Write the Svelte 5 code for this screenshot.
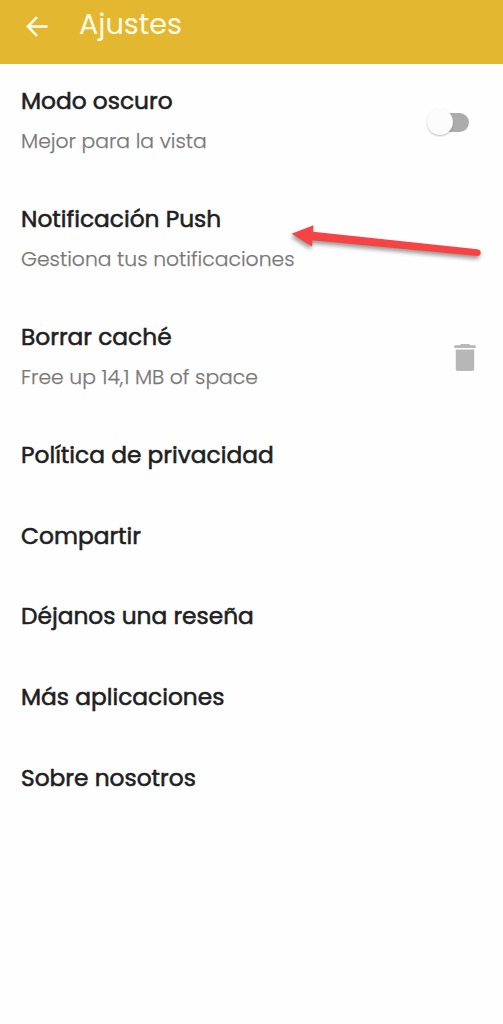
<script lang="ts">
    interface Setting {
        title: string;
        subtitle?: string;
        control?: 'switch' | 'trash';
    }

    const settings: Setting[] = [
        { title: "Modo oscuro", subtitle: "Mejor para la vista", control: "switch" },
        { title: "Notificación Push", subtitle: "Gestiona tus notificaciones" },
        { title: "Borrar caché", subtitle: "Free up 14,1 MB of space", control: "trash" },
        { title: "Política de privacidad" },
        { title: "Compartir" },
        { title: "Déjanos una reseña" },
        { title: "Más aplicaciones" },
        { title: "Sobre nosotros" }
    ];

    let darkMode: boolean = $state(false);
</script>

<div class="screen">
    <header>
        <button class="back" aria-label="Volver">
            <svg width="24" height="24" viewBox="0 0 24 24">
                <path d="M22.5 12.5H3M12 3.2L2.8 12.5L12 21.8" />
            </svg>
        </button>
        <h1>Ajustes</h1>
    </header>

    <main>
        {#each settings as item}
            <div class="item" class:tall={item.subtitle}>
                <div class="texts">
                    <div class="title">{item.title}</div>
                    {#if item.subtitle}
                        <div class="subtitle">{item.subtitle}</div>
                    {/if}
                </div>
                {#if item.control === 'switch'}
                    <button class="switch" class:on={darkMode} aria-label={item.title} onclick={() => darkMode = !darkMode}>
                        <span class="thumb"></span>
                    </button>
                {:else if item.control === 'trash'}
                    <svg class="trash" width="22" height="28" viewBox="0 0 22 28">
                        <path d="M0.3 1.3H5.6L7 0H15L16.4 1.3H21.7V4.1H0.3ZM1.8 5.5H20.2V24.5Q20.2 27.1 17.6 27.1H4.4Q1.8 27.1 1.8 24.5Z" />
                    </svg>
                {/if}
            </div>
        {/each}
    </main>

    <svg class="pointer" width="200" height="50" viewBox="285 220 200 50">
        <path d="M291.5 233.7L313.5 225.2L313 231.8L477.5 249.2Q481 250 480.8 253Q480.3 256.2 477 256L312.5 240.2L312 246.5Z" />
    </svg>
</div>

<style>
    :global(body) { margin: 0; background: #fefefe; }

    .screen {
        position: relative;
        height: 1024px;
        overflow: hidden;
        background: #fefefe;
        font-family: Poppins, Inter, sans-serif;
        white-space: nowrap;
    }

    header {
        height: 63.5px;
        box-sizing: border-box;
        padding: 0 25px 11px 24.5px;
        display: flex;
        align-items: center;
        background: #e3b830;
    }

    button { padding: 0; border: none; background: none; }

    .back { display: flex; width: 54.5px; }
    .back path { fill: none; stroke: #fffbe9; stroke-width: 2.5; }

    h1 {
        margin: 0 0 4.5px;
        font-size: 28.7px;
        line-height: 34px;
        font-weight: 400;
        color: #fffbe9;
    }

    .item {
        height: 80.8px;
        padding: 0 21px;
        display: flex;
        align-items: center;
        justify-content: space-between;
    }
    .item.tall { height: 117.8px; }

    .texts { margin-top: -5px; }
    .tall .texts { margin-top: -2.4px; }

    .title {
        font-size: 23.3px;
        line-height: 40px;
        font-weight: 400;
        color: #202020;
        -webkit-text-stroke: 0.55px #202020;
    }

    .subtitle {
        font-size: 20.35px;
        line-height: 40px;
        font-weight: 300;
        color: #777;
        -webkit-text-stroke: 0.25px #777;
    }

    .switch {
        display: flex;
        align-items: center;
        width: 36px;
        height: 19px;
        margin-right: 13px;
        border-radius: 10px;
        background: #acacac;
    }
    .switch.on { justify-content: flex-end; background: #e3b830; }

    .thumb {
        width: 26px;
        height: 26px;
        margin: 0 -6px;
        flex: none;
        border-radius: 50%;
        background: #fcfcfc;
        box-shadow: 0 1px 2px rgba(0, 0, 0, 0.25);
    }

    .trash { margin-right: 6px; fill: #b7b7b7; }

    .pointer {
        position: absolute;
        left: 285px;
        top: 220px;
        overflow: visible;
        filter: drop-shadow(-1px 3px 2px rgba(0, 0, 0, 0.4));
    }
    .pointer path { fill: #f64444; }
</style>
